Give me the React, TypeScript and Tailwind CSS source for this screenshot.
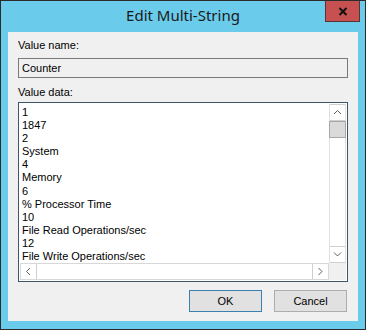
import React from "react";

const lines = [
  "1",
  "1847",
  "2",
  "System",
  "4",
  "Memory",
  "6",
  "% Processor Time",
  "10",
  "File Read Operations/sec",
  "12",
  "File Write Operations/sec",
];

function Chevron({ dir }: { dir: "up" | "down" | "left" | "right" }) {
  const d = {
    up: "M1 5 L4.5 1.5 L8 5",
    down: "M1 1.5 L4.5 5 L8 1.5",
    left: "M5 1 L1.5 4.5 L5 8",
    right: "M1.5 1 L5 4.5 L1.5 8",
  }[dir];
  const horiz = dir === "up" || dir === "down";
  return (
    <svg width={horiz ? 9 : 7} height={horiz ? 7 : 9} viewBox={horiz ? "0 0 9 7" : "0 0 7 9"}>
      <path d={d} fill="none" stroke="#606060" strokeWidth="1" />
    </svg>
  );
}

export default function App() {
  return (
    <div
      className="w-[366px] h-[330px] border border-[#2b2b2b] bg-[#6bcbea] flex flex-col overflow-hidden"
      style={{ fontFamily: '"Liberation Sans", Arial, sans-serif' }}
    >
      {/* title bar */}
      <div className="h-[31px] relative flex items-center justify-center shrink-0">
        <span
          className="text-[15px] text-[#1a1a1a] -mt-[2px]"
          style={{ fontFamily: '"Noto Sans", sans-serif' }}
        >
          Edit Multi-String
        </span>
        <div className="absolute right-[5px] top-0 w-[35px] h-[21px] bg-[#c75050] border border-[#5a3333] border-t-0 flex items-center justify-center">
          <svg width="10" height="9" viewBox="0 0 10 9">
            <path d="M1.5 1 L8.5 8 M8.5 1 L1.5 8" stroke="#111" strokeWidth="2" />
          </svg>
        </div>
      </div>

      {/* client area */}
      <div className="ml-[7px] mr-[7px] mb-[8px] flex-1 bg-[#f0f0f0] px-[10px] pt-[7px] flex flex-col text-[11px] text-black">
        <div className="h-[13px] leading-[13px]">Value name:</div>
        <div className="mt-[6px] h-[20px] border border-[#7a7a7a] bg-[#f0f0f0] px-[3px] leading-[18px]">
          Counter
        </div>
        <div className="mt-[8px] h-[13px] leading-[13px]">Value data:</div>
        <div className="mt-[3px] h-[180px] border border-[#3f566a] bg-white p-px flex flex-col">
          <div className="flex flex-1 min-h-0">
            <div className="flex-1 pl-[2px] pt-[2px] leading-[13.1px] overflow-hidden">
              {lines.map((l, i) => (
                <div key={i} className="whitespace-nowrap">
                  {l}
                </div>
              ))}
            </div>
            <div className="w-[17px] flex flex-col border-x border-[#e0e0e0] bg-white">
              <div className="h-[17px] border-y border-[#cfcfcf] flex items-center justify-center">
                <Chevron dir="up" />
              </div>
              <div className="h-[17px] bg-[#dadada] border border-[#a8a8a8] -mx-px"></div>
              <div className="flex-1"></div>
              <div className="h-[17px] border-y border-[#cfcfcf] flex items-center justify-center">
                <Chevron dir="down" />
              </div>
            </div>
          </div>
          <div className="flex h-[17px]">
            <div className="flex-1 flex border border-[#d8d8d8] bg-white">
              <div className="w-[16px] border-r border-[#cfcfcf] flex items-center justify-center">
                <Chevron dir="left" />
              </div>
              <div className="flex-1"></div>
              <div className="w-[16px] border-l border-[#cfcfcf] flex items-center justify-center">
                <Chevron dir="right" />
              </div>
            </div>
            <div className="w-[17px] bg-[#f0f0f0]"></div>
          </div>
        </div>
        <div className="mt-[8px] flex justify-end gap-[12px] pr-px">
          <button className="w-[73px] h-[22px] bg-[#e1e1e1] border border-[#3c7fb1] text-[11px]">
            OK
          </button>
          <button className="w-[73px] h-[22px] bg-[#e1e1e1] border border-[#adadad] text-[11px]">
            Cancel
          </button>
        </div>
      </div>
    </div>
  );
}
